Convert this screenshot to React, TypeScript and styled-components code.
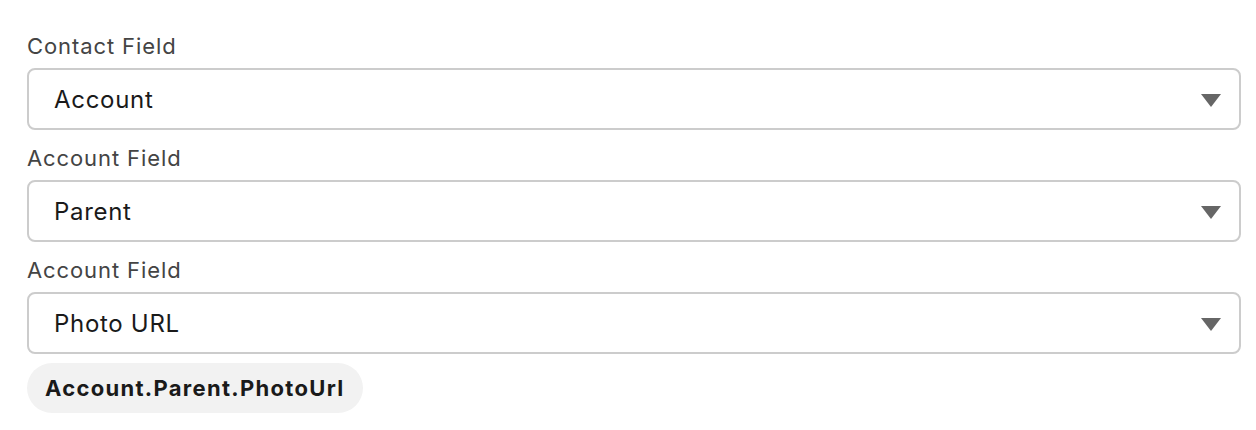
import React from "react";
import styled, { createGlobalStyle } from "styled-components";

const GlobalStyle = createGlobalStyle`
  body {
    margin: 0;
    background: #ffffff;
    font-family: Inter, "Noto Sans", sans-serif;
  }
`;

const Page = styled.div`
  padding: 18px 15px 0 27px;
  display: flex;
  flex-direction: column;
`;

const Label = styled.div`
  padding: 14px 0 8px;
  line-height: 28px;
  font-size: 22px;
  letter-spacing: 0.9px;
  color: #444444;
`;

const SelectBox = styled.div`
  box-sizing: border-box;
  height: 62px;
  display: flex;
  align-items: center;
  justify-content: space-between;
  padding: 0 18px 0 25px;
  border: 2px solid #cccccc;
  border-radius: 8px;
  font-size: 24px;
  letter-spacing: 0.7px;
  color: #1a1a1a;
`;

const Arrow = styled.span`
  width: 0;
  height: 0;
  border-left: 10px solid transparent;
  border-right: 10px solid transparent;
  border-top: 13px solid #666666;
  margin-top: 2px;
`;

const Pill = styled.div`
  align-self: flex-start;
  margin-top: 9px;
  height: 50px;
  display: flex;
  align-items: center;
  padding: 0 18px;
  border-radius: 25px;
  background: #f2f2f2;
  font-size: 22px;
  font-weight: 700;
  letter-spacing: 1.3px;
  color: #1a1a1a;
`;

const fields = [
  { label: "Contact Field", value: "Account" },
  { label: "Account Field", value: "Parent" },
  { label: "Account Field", value: "Photo URL" },
];

const App: React.FC = () => {
  return (
    <>
      <GlobalStyle />
      <Page>
        {fields.map((field, i) => (
          <React.Fragment key={i}>
            <Label>{field.label}</Label>
            <SelectBox>
              {field.value}
              <Arrow />
            </SelectBox>
          </React.Fragment>
        ))}
        <Pill>Account.Parent.PhotoUrl</Pill>
      </Page>
    </>
  );
};

export default App;
